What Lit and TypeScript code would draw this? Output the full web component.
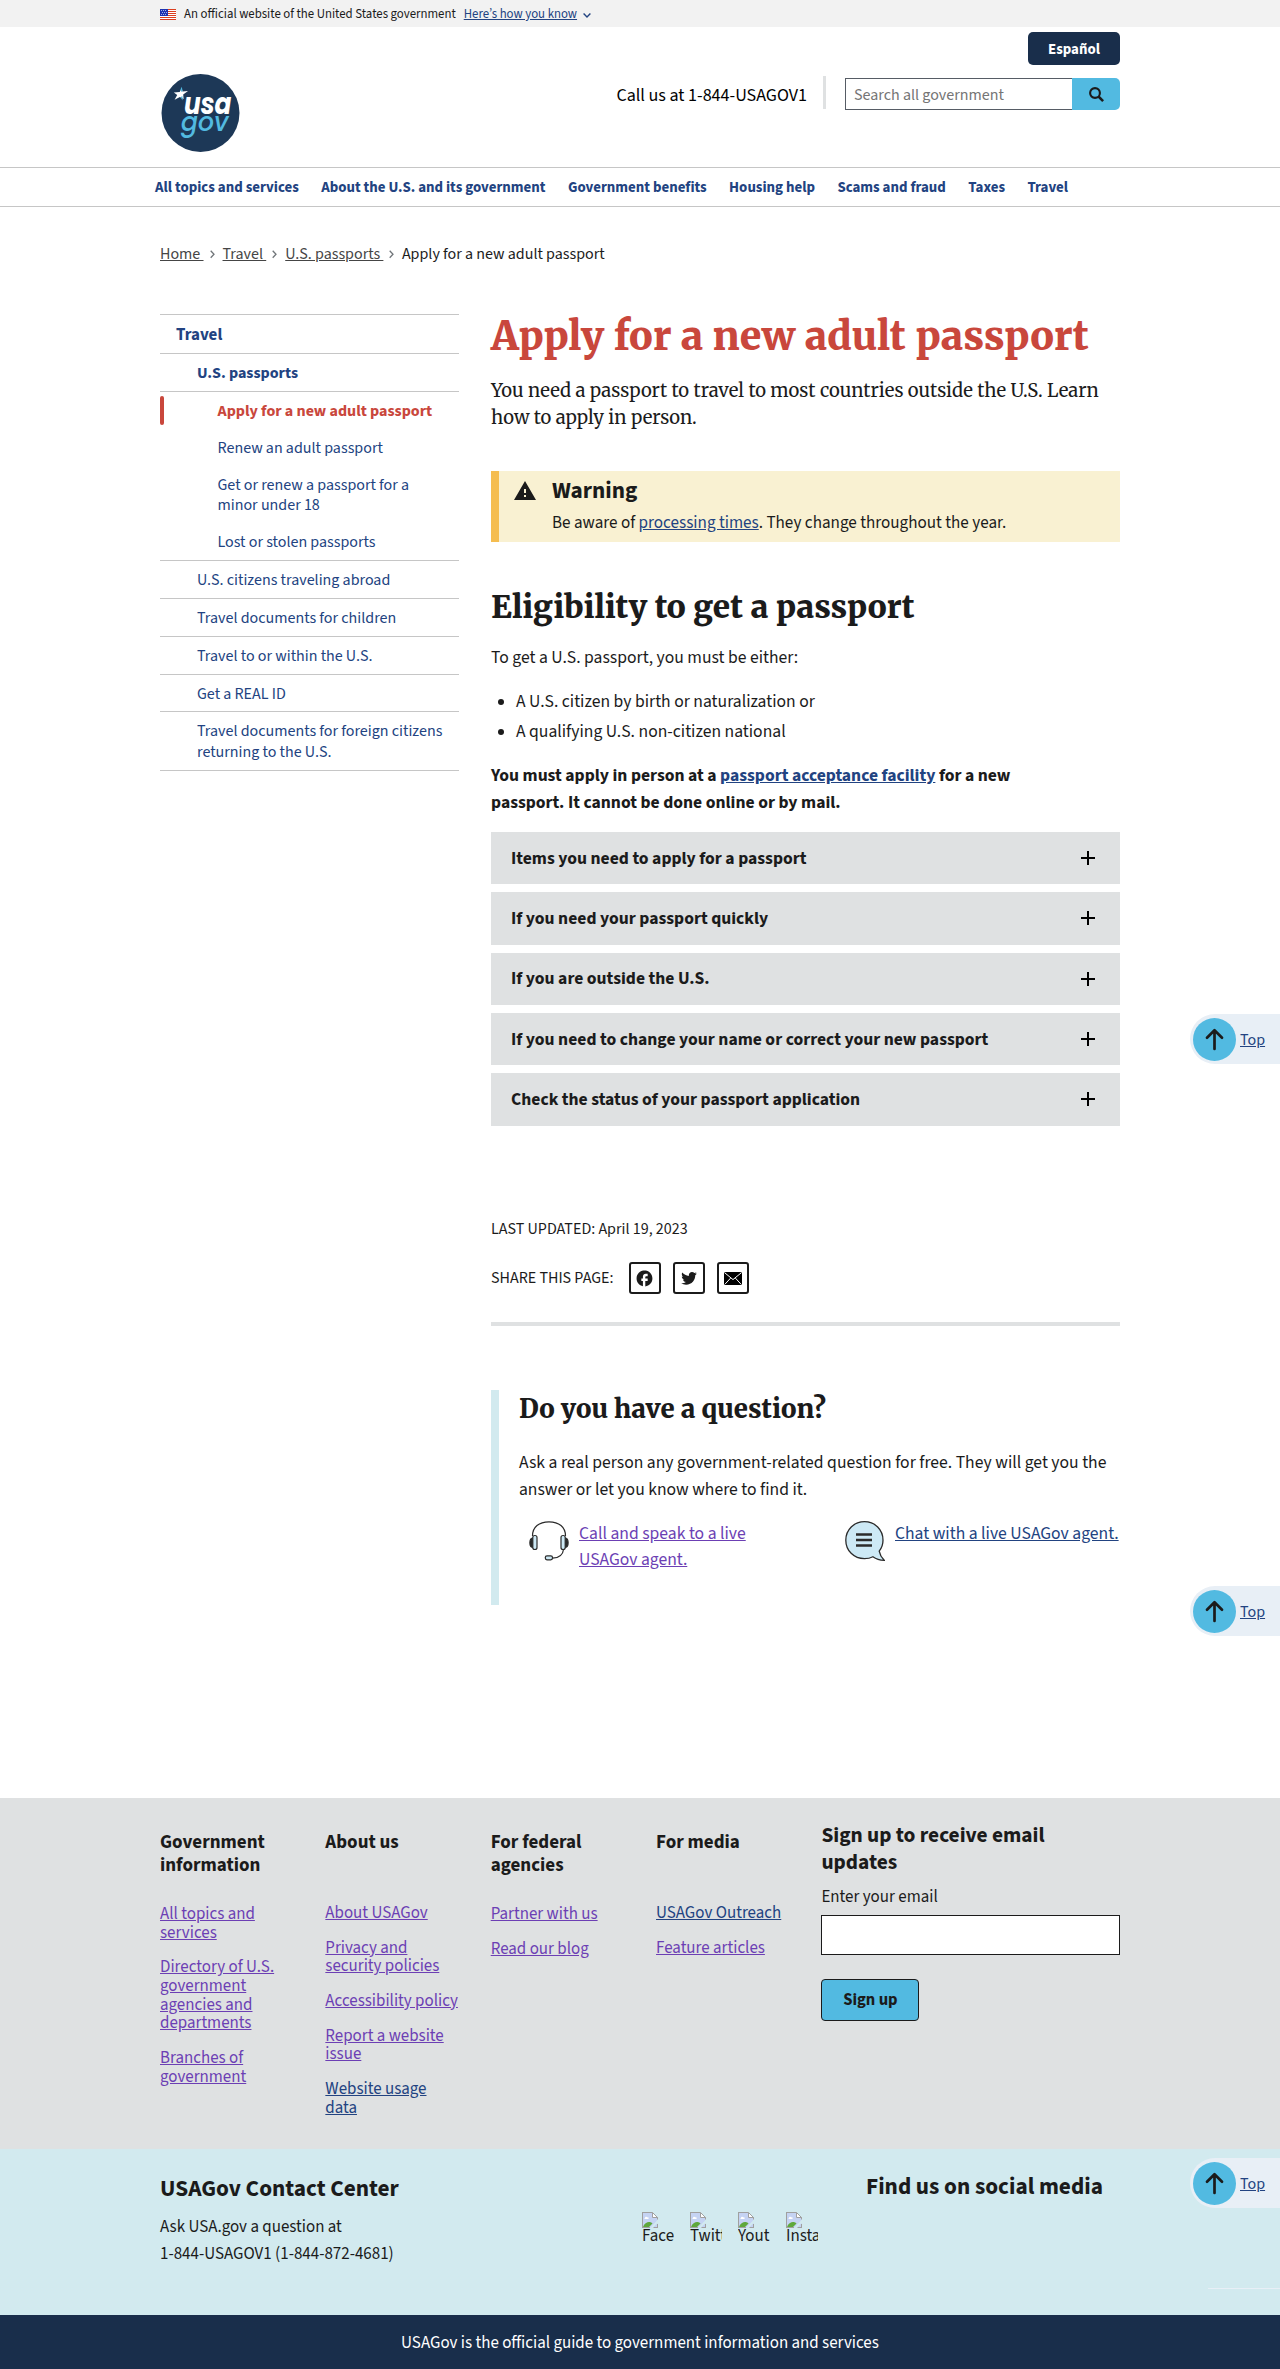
import { LitElement, html, css, svg } from "lit";
import { customElement } from "lit/decorators.js";

interface NavItem { label: string; kind: string }

const primaryNav = ["All topics and services", "About the U.S. and its government", "Government benefits", "Housing help", "Scams and fraud", "Taxes", "Travel"];

const sideNav: NavItem[] = [
  { label: "Travel", kind: "root" },
  { label: "U.S. passports", kind: "parent" },
  { label: "Apply for a new adult passport", kind: "leaf first current" },
  { label: "Renew an adult passport", kind: "leaf" },
  { label: "Get or renew a passport for a minor under 18", kind: "leaf" },
  { label: "Lost or stolen passports", kind: "leaf last" },
  { label: "U.S. citizens traveling abroad", kind: "child" },
  { label: "Travel documents for children", kind: "child" },
  { label: "Travel to or within the U.S.", kind: "child" },
  { label: "Get a REAL ID", kind: "child short" },
  { label: "Travel documents for foreign citizens returning to the U.S.", kind: "child" },
];

const accordion = ["Items you need to apply for a passport", "If you need your passport quickly", "If you are outside the U.S.", "If you need to change your name or correct your new passport", "Check the status of your passport application"];

const footerColumns: { title: string; links: { label: string; fresh?: boolean }[] }[] = [
  { title: "Government information", links: [{ label: "All topics and services" }, { label: "Directory of U.S. government agencies and departments" }, { label: "Branches of government" }] },
  { title: "About us", links: [{ label: "About USAGov" }, { label: "Privacy and security policies" }, { label: "Accessibility policy" }, { label: "Report a website issue" }, { label: "Website usage data", fresh: true }] },
  { title: "For federal agencies", links: [{ label: "Partner with us" }, { label: "Read our blog" }] },
  { title: "For media", links: [{ label: "USAGov Outreach", fresh: true }, { label: "Feature articles" }] },
];

const social = ["Facebook", "Twitter", "Youtube", "Instagram"];

const flag = html`<svg class="flag" viewBox="0 0 16 11" width="16" height="11">
  <rect width="16" height="11" fill="#fff"/>
  ${[0, 2, 4, 6, 8, 10].map(y => svg`<rect y=${y} width="16" height="1" fill="#db3e1f"/>`)}
  <rect width="8" height="7" fill="#1e33b1"/>
  ${[[1, 1], [3, 1], [5, 1], [2, 3], [4, 3], [6, 3], [1, 5], [3, 5], [5, 5]].map(([x, y]) => svg`<rect x=${x} y=${y} width="1" height="1" fill="#a5afe0"/>`)}
</svg>`;

const logo = html`<svg class="logo" viewBox="0 0 80 80" width="80" height="80">
  <circle cx="40.5" cy="40" r="39" fill="#1d3857"/>
  <path d="M13.800 19.500l5.900-.6 2-4 .8 3.600 5.500-.4-4.800 3.300.4 4.600-3.700-1.900-5.300 2.600 2.600-4.600z" fill="#fff"/>
  <path d="M20.500 16.300l1.300-2.600.8 4.600-1.400.4zM20.500 24.300l1.900-1.400.2 4.600z" fill="#4fb6dc"/>
  <text class="logo-usa" x="24" y="40.500" textLength="47.500" lengthAdjust="spacingAndGlyphs">usa</text>
  <text class="logo-gov" x="21" y="57.500" textLength="47.500" lengthAdjust="spacingAndGlyphs">gov</text>
</svg>`;

const plus = html`<svg width="14" height="14" viewBox="0 0 14 14"><path d="M6 0h2v6h6v2H8v6H6V8H0V6h6z" fill="#000"/></svg>`;

const warningIcon = html`<svg class="warn-icon" width="22" height="19" viewBox="1 2 22 19"><path d="M1 21h22L12 2 1 21zm12-3h-2v-2h2v2zm0-4h-2v-4h2v4z" fill="#1b1b1b"/></svg>`;

const facebookIcon = html`<svg width="19" height="19" viewBox="0 0 24 24"><path fill="#1b1b1b" d="M22 12c0-5.520-4.480-10-10-10S2 6.480 2 12c0 4.840 3.440 8.870 8 9.800V15H8v-3h2V9.500C10 7.570 11.570 6 13.500 6H16v3h-2c-.550 0-1 .450-1 1v2h3v3h-3v6.950c5.050-.500 9-4.760 9-9.950z"/></svg>`;
const twitterIcon = html`<svg width="18" height="18" viewBox="0 0 24 24"><path fill="#1b1b1b" d="M22.460 6c-.77.350-1.600.580-2.460.690.880-.530 1.560-1.370 1.880-2.380-.830.500-1.750.850-2.720 1.050C18.370 4.500 17.260 4 16 4c-2.350 0-4.270 1.920-4.270 4.290 0 .340.040.670.110.980C8.280 9.090 5.110 7.380 3 4.790c-.370.630-.580 1.370-.580 2.150 0 1.490.750 2.810 1.910 3.560-.71 0-1.370-.200-1.950-.500v.030c0 2.080 1.480 3.820 3.440 4.210a4.220 4.220 0 0 1-1.930.070 4.280 4.280 0 0 0 4 2.980 8.521 8.521 0 0 1-5.330 1.840c-.340 0-.680-.020-1.020-.060C3.440 20.290 5.700 21 8.120 21 16 21 20.330 14.460 20.330 8.790c0-.190 0-.370-.010-.560.840-.600 1.560-1.360 2.140-2.230z"/></svg>`;
const mailIcon = html`<svg width="18" height="13" viewBox="0 0 18 13"><rect width="18" height="13" rx="1.500" fill="#000"/><path d="M1 1l8 6.600L17 1M1 12.200l5.600-6.100M17 12.200l-5.600-6.100" fill="none" stroke="#fff" stroke-width="1"/></svg>`;

const headset = html`<svg class="ask-icon" width="40" height="40" viewBox="0 0 40 40" fill="none" stroke="#2b2b2b" stroke-width="1.200">
  <path d="M3.500 15C3.500 6 10 .900 20 .900S36.500 6 36.500 15"/>
  <path d="M3.500 17c-3.500.500-3.500 9 0 9.500zM36.500 17c3.500.500 3.500 9 0 9.500z" fill="#2b2b2b"/>
  <rect x="3.800" y="14.500" width="4.200" height="14" rx="2" fill="#cde9f5"/>
  <rect x="32" y="14.500" width="4.200" height="14" rx="2" fill="#cde9f5"/>
  <path d="M34.500 28.500c-.5 5-4 8.300-11 8.600"/>
  <rect x="16.300" y="34.800" width="7.200" height="4" rx="1.700" fill="#cde9f5"/>
</svg>`;

const chat = html`<svg class="ask-icon" width="40" height="40" viewBox="0 0 40 40">
  <path d="M19.500.700C9 .700.800 8.800.800 19.200c0 10.300 8 18.500 18.700 18.500 3.200 0 6-.700 8.400-2 3 2.200 6.600 3.500 11.300 3.600-2.600-2.700-4.400-5.800-5-9.200 2.500-3.100 3.800-6.800 3.800-10.900C38 8.800 30 .700 19.500.700z" fill="#cde9f5" stroke="#2b2b2b" stroke-width="1.300"/>
  <path d="M11 13.500h16M11 19h16M11 24.500h16" stroke="#2b2b2b" stroke-width="2.600"/>
</svg>`;

const brokenImage = html`<svg width="16" height="16" viewBox="0 0 16 16">
  <path d="M.5.500h10l5 5v10H.5z" fill="#c5d3f3"/>
  <path d="M3 6c0-1.500 2-1.500 2.300-.600C7 5 7.200 7 6 7H3.200C2 7 2 6 3 6z" fill="#fff"/>
  <path d="M1 15c1-3.500 4-5 6-5 1.500 0 2.500.500 3.500 1.500L7 15z" fill="#5fa83c"/>
  <path d="M16 7.500L8.500 15.500H11L16 10.500z" fill="#d2eaef"/>
  <path d="M15.500 5v2.500M.5 0v16M0 .500h10.500M0 15.500h8M11.500 15.500H16M15.500 12v4" stroke="#a0a0a0" fill="none"/>
  <path d="M10.500.500v5h5z" fill="#fff" stroke="#a0a0a0"/>
</svg>`;

const crumbArrow = html`<svg width="5" height="9" viewBox="0 0 5 9"><path d="M.7.700l3.300 3.500-3.300 3.500" fill="none" stroke="#71767a" stroke-width="1.300"/></svg>`;

@customElement("back-to-top")
class BackToTop extends LitElement {
  static styles = css`
    :host { display: block; width: 90px; height: 50px; }
    .pill { box-sizing: border-box; height: 50px; display: flex; align-items: center; padding-left: 3px; gap: 4px; background: #e8eff6; border-radius: 25px 0 0 25px; font-size: 16px; }
    a { color: #224381; text-decoration: underline; line-height: 20px; padding-top: 1px; }
  `;
  render() {
    return html`<div class="pill"><svg width="43" height="43" viewBox="0 0 43 43"><circle cx="21.500" cy="21.500" r="21.500" fill="#52bae1"/><path d="M21.500 31V12.500M14 19.800l7.500-7.500 7.500 7.500" fill="none" stroke="#1b1b1b" stroke-width="2.700" stroke-linecap="round" stroke-linejoin="round"/></svg><a>Top</a></div>`;
  }
}

@customElement("app-root")
class AppRoot extends LitElement {
  static styles = css`
    :host { display: block; position: relative; height: 2369px; overflow: hidden; background: #fff; color: #1b1b1b; font-family: "Source Sans 3", "Noto Sans CJK SC", "Open Sans", sans-serif; font-size: 16.960px; line-height: 27.200px; }
    * { box-sizing: border-box; margin: 0; padding: 0; }
    ul { list-style: none; }
    a { color: #224381; text-decoration: underline; }
    a.visited { color: #6c3fb4; }
    h1, h2, .lead { font-family: Merriweather, "DejaVu Serif Condensed", serif; }
    h1, h2 { font-weight: 900; }
    .wrap { padding: 0 160px; }

    .banner { height: 27px; background: #f2f2f2; display: flex; align-items: center; font-size: 12.800px; line-height: 16px; }
    .flag { margin: 2px 8px 0 0; }
    .banner .how { margin-left: 8px; padding-top: 1px; }
    .chevron { margin: 3px 0 0 6px; }

    .header { height: 140px; display: flex; }
    .logo { margin-top: 46px; }
    .logo-usa { font: italic 700 29px Poppins, "Open Sans", sans-serif; fill: #fff; }
    .logo-gov { font: italic 500 26px Poppins, "Open Sans", sans-serif; fill: #52bae1; }
    .tools { margin-left: auto; display: flex; flex-direction: column; align-items: flex-end; }
    .lang { margin-top: 5px; width: 92px; height: 33px; border-radius: 5px; background: #192e4b; color: #fff; font: 700 14.880px/33px "Source Sans 3", "Noto Sans CJK SC", sans-serif; padding-top: 1px; text-align: center; border: 0; }
    .tool-row { display: flex; margin-top: 11px; align-items: flex-start; }
    .call { color: #000; font-size: 18.050px; line-height: 28px; padding-top: 5.500px; }
    .divider { width: 3px; height: 33px; background: #dfe1e2; margin: 0 19px 0 16px; }
    .search { display: flex; margin-top: 2px; }
    .field { width: 227px; height: 32px; border: 1px solid #565c65; border-right: 0; padding-left: 8px; line-height: 32px; font-size: 16px; color: #757575; }
    .go { width: 48px; height: 32px; background: #52bae1; border-radius: 0 5px 5px 0; display: grid; place-items: center; }

    .primary { height: 40px; border: 1px solid #c6c6c6; border-width: 1px 0; padding: 1px 0 0 155px; display: flex; gap: 22.450px; font-size: 14.880px; line-height: 38px; font-weight: 700; color: #224381; }

    .crumbs { display: flex; align-items: flex-start; padding-top: 35px; height: 105px; font-size: 16px; line-height: 24px; }
    .crumbs a { color: #454545; white-space: pre; }
    .crumbs svg { margin: 8px 8px 0 6px; }
    .crumbs span { margin-left: -.500px; }

    .body { display: grid; grid-template-columns: 299px 1fr; gap: 32px; height: 1486px; align-items: start; }
    .side { margin-top: 2px; border-bottom: 1px solid #c6c6c6; font-size: 16px; line-height: 20.800px; color: #224381; }
    .side li { padding: 9.200px 4px 7px 37px; }
    .side .root, .side .parent, .side .child, .side .first { border-top: 1px solid #c6c6c6; }
    .side .root { font-size: 16.960px; line-height: 22px; font-weight: 700; padding: 9.300px 16px 6.700px; }
    .side .parent { font-weight: 700; }
    .side .short { padding-bottom: 6px; }
    .side .leaf { padding: 9px 20px 7px 57.500px; }
    .side .current { color: #c9473c; font-weight: 700; position: relative; }
    .side .current::before { content: ""; position: absolute; left: 0; top: 4px; width: 4px; height: 29px; border-radius: 2px; background: #c9473c; }

    h1 { font-size: 39.260px; line-height: 48px; color: #c9473c; white-space: nowrap; }
    .lead { margin-top: 16.700px; font-size: 18.430px; line-height: 27.200px; }
    .warning { margin-top: 40px; height: 71px; background: #f9f1d2; border-left: 8px solid #f5bd50; padding-left: 15px; display: flex; }
    .warn-icon { margin: 10px 16px 0 0; }
    .warning h3 { font-size: 23.200px; line-height: 28px; margin-top: 6px; }
    .warning p { margin-top: 4px; font-size: 17.100px; }
    h2 { margin-top: 45px; font-size: 31.350px; line-height: 40px; }
    .intro { margin-top: 17px; font-size: 17.600px; }
    .bullets { margin-top: 15.400px; font-size: 17.600px; }
    .bullets li { display: flex; align-items: center; height: 30px; padding-left: 7px; gap: 12px; }
    .bullets li::before { content: ""; width: 6px; height: 6px; border-radius: 50%; background: #1b1b1b; }
    .must { margin-top: 15.200px; font-size: 17.600px; font-weight: 700; max-width: 560px; }
    .accordion { margin-top: 15.700px; display: flex; flex-direction: column; gap: 8px; }
    .accordion li { height: 52.330px; background: #dfe1e2; padding: 0 25px 0 20px; display: flex; align-items: center; justify-content: space-between; font-size: 17.600px; font-weight: 700; }
    .updated { margin-top: 90.700px; font-size: 16px; line-height: 26px; }
    .share { margin-top: 20px; display: flex; align-items: center; height: 32px; font-size: 16px; gap: 12px; }
    .share span { margin-right: 3px; padding-top: 1px; }
    .share i { width: 32px; height: 32px; border: 2px solid #1b1b1b; border-radius: 3px; display: grid; place-items: center; }
    .rule { margin-top: 28px; height: 4px; background: #dfe1e2; }
    .question { margin-top: 64px; height: 215px; border-left: 8px solid #d2eaef; padding: 3px 0 0 20px; font-size: 17.600px; }
    .question h2 { margin: 0; font-size: 25.630px; line-height: 32px; }
    .question p { margin-top: 24.600px; line-height: 26.800px; }
    .ask { display: grid; grid-template-columns: 316px 1fr; margin-top: 17.400px; line-height: 26.200px; }
    .ask div { display: flex; padding-left: 10px; }
    .ask-icon { flex: none; margin-right: 10px; }
    .ask a { white-space: nowrap; }

    .links { height: 351px; background: #dfe1e2; display: flex; }
    .col { width: 165.500px; padding: 32.500px 30px 0 0; line-height: 18.660px; }
    .col h3 { font-size: 19px; line-height: 23.300px; min-height: 45.600px; margin-bottom: 27.900px; }
    .col li { margin-bottom: 16px; }
    .signup { width: 299px; padding-top: 25px; }
    .signup h3 { font-size: 21.400px; line-height: 26.500px; max-width: 260px; }
    .signup label { display: block; margin-top: 8px; line-height: 27px; }
    .email { height: 40px; border: 1px solid #1b1b1b; background: #fff; margin-top: 4px; }
    .btn { margin-top: 24px; width: 98px; height: 42px; border: 1px solid #1b1b1b; border-radius: 4px; background: #52bae1; font-weight: 700; font-size: 16.600px; line-height: 40px; text-align: center; }

    .contact { height: 166px; background: #d2eaef; display: flex; }
    .contact h3 { font-size: 23.260px; line-height: 30px; }
    .center { padding-top: 25px; width: 482px; }
    .center p { margin-top: 9.500px; }
    .social { display: flex; gap: 16px; padding-top: 63px; width: 224px; }
    .social li { width: 32px; height: 32px; overflow: hidden; }
    .social svg { display: block; }
    .social span { display: block; line-height: 19px; height: 19px; margin-top: -1px; }
    .find { padding-top: 23px; }
    .tagline { height: 54px; background: #192e4b; color: #fff; text-align: center; line-height: 54px; padding-top: 1px; }
    back-to-top { position: absolute; right: 0; }
    .one { top: 1014px; }
    .two { top: 1586px; }
    .three { top: 2158px; }
    .sliver { position: absolute; right: 0; top: 2288px; width: 72px; height: 1px; background: #e8eff6; }
  `;

  render() {
    return html`
      <div class="banner wrap">${flag}<span>An official website of the United States government</span><a class="how">Here’s how you know</a>
        <svg class="chevron" width="8" height="5" viewBox="0 0 8 5"><path d="M.6.600L4 4 7.400.600" fill="none" stroke="#224381" stroke-width="1.400"/></svg></div>
      <div class="header wrap">${logo}
        <div class="tools"><button class="lang">Español</button>
          <div class="tool-row"><span class="call">Call us at 1-844-USAGOV1</span><span class="divider"></span>
            <div class="search"><div class="field">Search all government</div><div class="go"><svg width="15" height="15" viewBox="0 0 15 15" fill="none" stroke="#1b1b1b"><circle cx="6" cy="6" r="4.900" stroke-width="2.100"/><path d="M9.500 9.500l4.600 4.600" stroke-width="2.500"/></svg></div></div>
          </div></div>
      </div>
      <nav class="primary">${primaryNav.map(n => html`<span>${n}</span>`)}</nav>
      <div class="crumbs wrap"><a>Home </a>${crumbArrow}<a>Travel </a>${crumbArrow}<a>U.S. passports </a>${crumbArrow}<span>Apply for a new adult passport</span></div>
      <div class="body wrap">
        <ul class="side">${sideNav.map(n => html`<li class=${n.kind}>${n.label}</li>`)}</ul>
        <main>
          <h1>Apply for a new adult passport</h1>
          <p class="lead">You need a passport to travel to most countries outside the U.S. Learn how to apply in person.</p>
          <div class="warning">${warningIcon}<div><h3>Warning</h3><p>Be aware of <a>processing times</a>. They change throughout the year.</p></div></div>
          <h2>Eligibility to get a passport</h2>
          <p class="intro">To get a U.S. passport, you must be either:</p>
          <ul class="bullets"><li>A U.S. citizen by birth or naturalization or</li><li>A qualifying U.S. non-citizen national</li></ul>
          <p class="must">You must apply in person at a <a>passport acceptance facility</a> for a new passport. It cannot be done online or by mail.</p>
          <ul class="accordion">${accordion.map(t => html`<li>${t}${plus}</li>`)}</ul>
          <p class="updated">LAST UPDATED: April 19, 2023</p>
          <div class="share"><span>SHARE THIS PAGE:</span><i>${facebookIcon}</i><i>${twitterIcon}</i><i>${mailIcon}</i></div>
          <div class="rule"></div>
          <section class="question">
            <h2>Do you have a question?</h2>
            <p>Ask a real person any government-related question for free. They will get you the answer or let you know where to find it.</p>
            <div class="ask"><div>${headset}<a class="visited">Call and speak to a live<br>USAGov agent.</a></div><div>${chat}<a>Chat with a live USAGov agent.</a></div></div>
          </section>
        </main>
      </div>
      <div class="links wrap">
        ${footerColumns.map(col => html`<div class="col"><h3>${col.title}</h3><ul>${col.links.map(l => html`<li><a class=${l.fresh ? "" : "visited"}>${l.label}</a></li>`)}</ul></div>`)}
        <div class="signup"><h3>Sign up to receive email updates</h3><label>Enter your email</label><div class="email"></div><div class="btn">Sign up</div></div>
      </div>
      <div class="contact wrap">
        <div class="center"><h3>USAGov Contact Center</h3><p>Ask USA.gov a question at<br>1-844-USAGOV1 (1-844-872-4681)</p></div>
        <ul class="social">${social.map(s => html`<li>${brokenImage}<span>${s}</span></li>`)}</ul>
        <h3 class="find">Find us on social media</h3>
      </div>
      <div class="tagline">USAGov is the official guide to government information and services</div>
      <back-to-top class="one"></back-to-top><back-to-top class="two"></back-to-top><back-to-top class="three"></back-to-top>
      <div class="sliver"></div>`;
  }
}
